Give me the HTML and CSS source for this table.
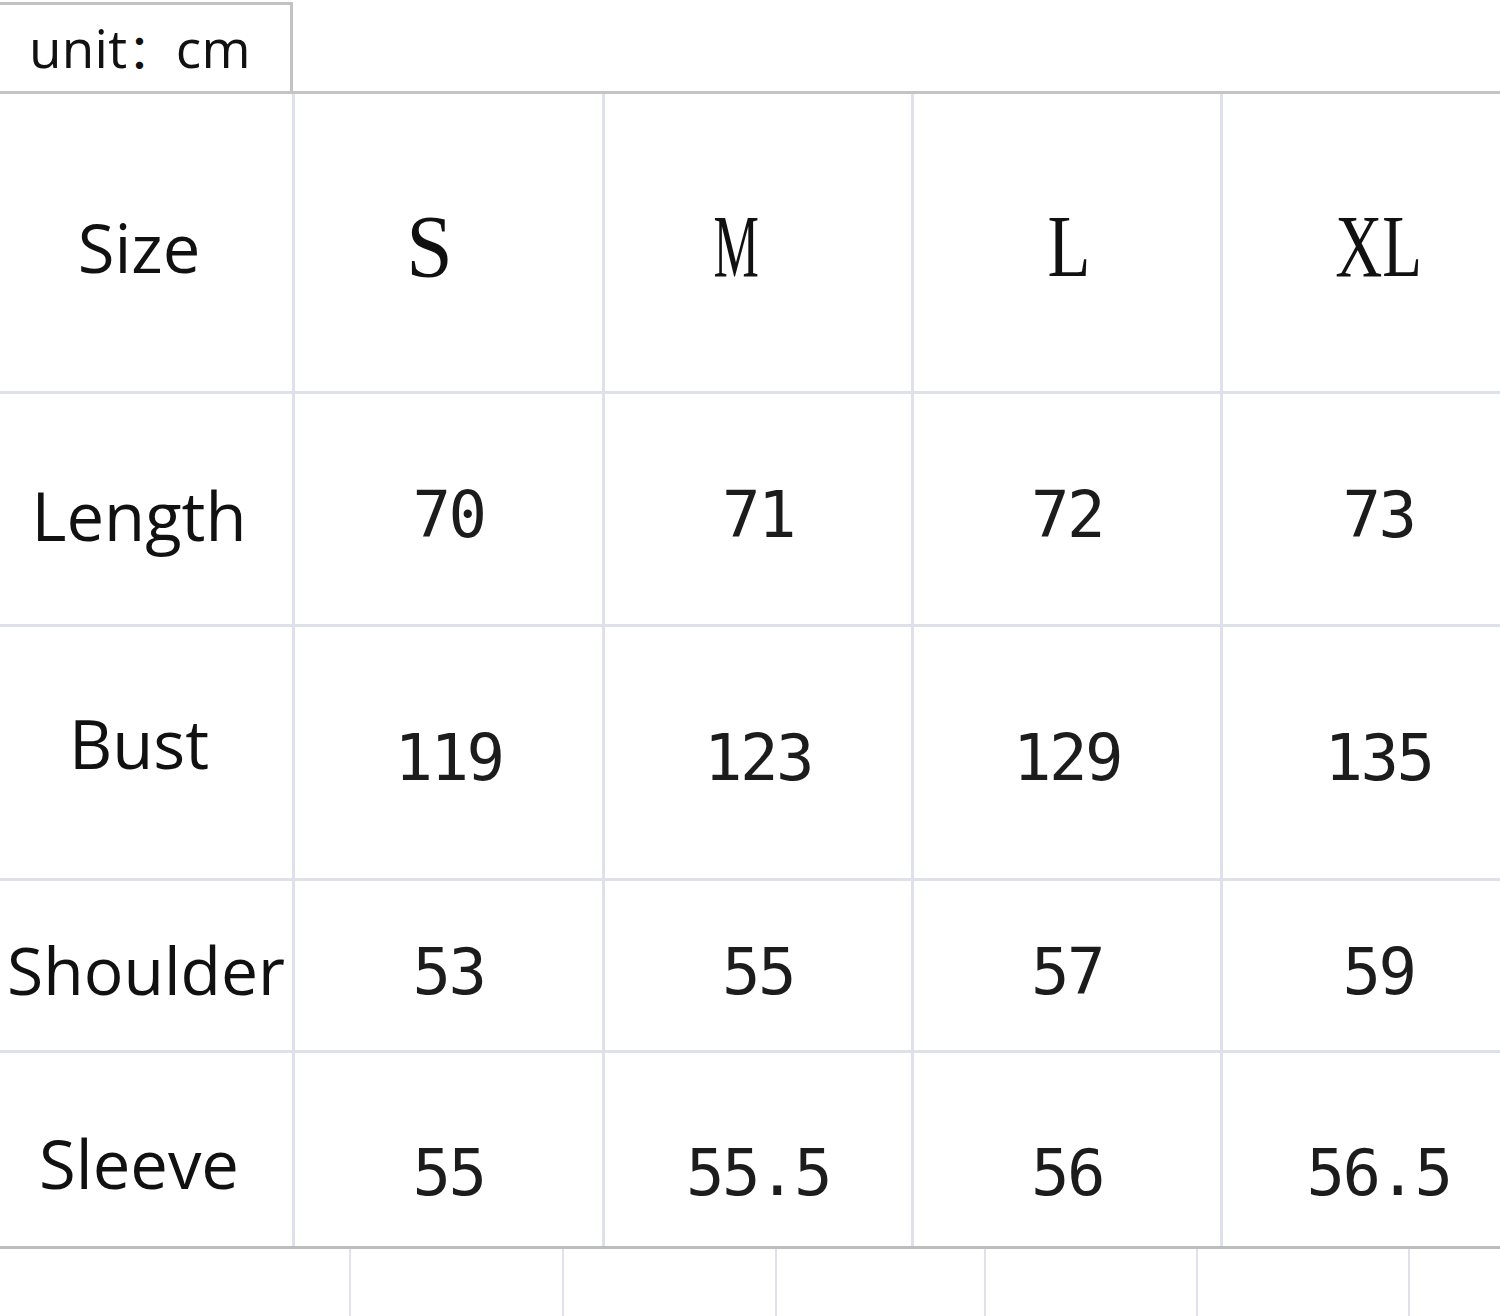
FILE: index.html
```html
<!DOCTYPE html>
<html lang="en">
<head>
<meta charset="utf-8">
<title>Size chart</title>
<link rel="stylesheet" href="styles.css">
</head>
<body>
<div class="sheet">
  <div class="topbar">
    <div class="unit">unit<span class="colon">：</span>cm</div>
  </div>
  <div class="chart">
    <div class="cell label r1">Size</div>
    <div class="cell head r1 hs"><span>S</span></div>
    <div class="cell head r1 hm"><span>M</span></div>
    <div class="cell head r1 hl"><span>L</span></div>
    <div class="cell head r1 hxl last"><span>XL</span></div>

    <div class="cell label r2">Length</div>
    <div class="cell num r2">70</div>
    <div class="cell num r2">71</div>
    <div class="cell num r2">72</div>
    <div class="cell num r2 last">73</div>

    <div class="cell label r3">Bust</div>
    <div class="cell num r3">119</div>
    <div class="cell num r3">123</div>
    <div class="cell num r3">129</div>
    <div class="cell num r3 last">135</div>

    <div class="cell label r4">Shoulder</div>
    <div class="cell num r4">53</div>
    <div class="cell num r4">55</div>
    <div class="cell num r4">57</div>
    <div class="cell num r4 last">59</div>

    <div class="cell label r5">Sleeve</div>
    <div class="cell num r5">55</div>
    <div class="cell num r5">55.5</div>
    <div class="cell num r5">56</div>
    <div class="cell num r5 last">56.5</div>
  </div>
  <div class="tail">
    <div class="tcol"></div>
    <div class="tcol"></div>
    <div class="tcol"></div>
    <div class="tcol"></div>
    <div class="tcol"></div>
    <div class="tcol"></div>
    <div class="tcol"></div>
  </div>
</div>
</body>
</html>
```

FILE: styles.css
```css
html, body {
  margin: 0;
  padding: 0;
  background: #ffffff;
}

.sheet {
  width: 1500px;
  height: 1316px;
  overflow: hidden;
  color: #111111;
}

.topbar {
  height: 91px;
  display: flex;
}

.unit {
  box-sizing: border-box;
  width: 293px;
  height: 89px;
  margin-top: 2px;
  border-top: 3px solid #c2c2c2;
  border-right: 3px solid #c2c2c2;
  display: flex;
  align-items: center;
  padding-left: 29px;
  padding-bottom: 2px;
  font-family: "Open Sans", "Noto Sans", sans-serif;
  font-size: 53px;
  letter-spacing: 0.3px;
}

.colon {
  font-family: "Noto Sans CJK SC", sans-serif;
  font-size: 48px;
}

.chart {
  display: grid;
  grid-template-columns: 295px 310px 309px 309px 1fr;
  grid-template-rows: 300px 233px 254px 172px 193px;
  border-top: 3px solid #c4c4c4;
  border-bottom: 3px solid #bdbdbd;
}

.cell {
  box-sizing: border-box;
  border-right: 3px solid #dfe1ea;
  border-bottom: 3px solid #dfe1ea;
  display: flex;
  align-items: center;
  justify-content: center;
}

.cell.last {
  border-right: none;
  padding-left: 34px;
}

.r5 {
  border-bottom: none;
}

.label {
  font-family: "Open Sans", "Noto Sans", sans-serif;
  font-size: 67px;
  padding-right: 14px;
  white-space: nowrap;
}

.r4.label {
  font-size: 66px;
  padding-right: 0;
}

.head span {
  display: inline-block;
  font-family: "Liberation Serif", "Times New Roman", serif;
  font-size: 88px;
}

.hs span { transform: scaleX(0.95); }
.hm span { transform: scaleX(0.58); }
.hl span { transform: scaleX(0.8); }
.hxl span { transform: scaleX(0.74); }

.hs { padding-right: 38px; }
.hm { padding-right: 44px; }
.hl { padding-left: 4px; }

.num {
  font-family: "DejaVu Sans Mono", "Liberation Mono", monospace;
  font-size: 64px;
  letter-spacing: -2.5px;
  white-space: pre;
  color: #1c1c1c;
}

.r1.label { padding-top: 8px; }
.head { padding-top: 8px; }
.r2 { padding-top: 12px; }
.r3.label { padding-bottom: 20px; }
.r3.num { padding-top: 10px; }
.r4.label { padding-top: 6px; }
.r4.num { padding-top: 12px; }
.r5.label { padding-top: 26px; }
.r5.num { padding-top: 46px; }

.tail {
  display: grid;
  grid-template-columns: 349px 213px 213px 209px 212px 212px 1fr;
  height: 67px;
}

.tcol {
  border-left: 2px solid #e0e2ea;
}

.tcol:first-child {
  border-left: none;
}
```
